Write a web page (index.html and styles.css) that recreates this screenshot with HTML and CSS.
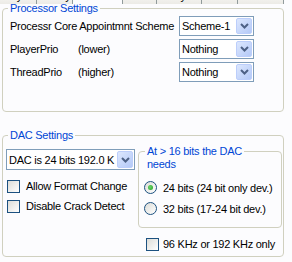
FILE: index.html
```html
<!DOCTYPE html>
<html lang="en">
<head>
    <meta charset="UTF-8">
    <title>Output Settings</title>
    <link rel="stylesheet" href="styles.css">
</head>
<body>
    <div class="tabs">
        <span class="tab">Playlist</span>
        <span class="tab">Library</span>
        <span class="tab tab-active">Output</span>
        <span class="tab">DSP</span>
        <span class="tab">Analysis</span>
        <span class="tab">Info</span>
        <span class="tab">Shortcuts</span>
    </div>

    <div class="page">
        <div class="group proc">
            <div class="group-title">Processor Settings</div>
            <div class="proc-grid">
                <span>Processr Core Appointmnt Scheme</span>
                <div class="combo">
                    <span class="combo-text">Scheme-1</span>
                    <span class="combo-btn"><svg width="9" height="6" viewBox="0 0 9 6"><path d="M1 1l3.5 3.5L8 1" /></svg></span>
                </div>

                <span class="prio"><span class="prio-name">PlayerPrio</span>(lower)</span>
                <div class="combo">
                    <span class="combo-text">Nothing</span>
                    <span class="combo-btn"><svg width="9" height="6" viewBox="0 0 9 6"><path d="M1 1l3.5 3.5L8 1" /></svg></span>
                </div>

                <span class="prio"><span class="prio-name">ThreadPrio</span>(higher)</span>
                <div class="combo">
                    <span class="combo-text">Nothing</span>
                    <span class="combo-btn"><svg width="9" height="6" viewBox="0 0 9 6"><path d="M1 1l3.5 3.5L8 1" /></svg></span>
                </div>
            </div>
        </div>

        <div class="group dac">
            <div class="group-title">DAC Settings</div>
            <div class="dac-grid">
                <div class="dac-left">
                    <div class="combo combo-tall">
                        <span class="combo-text">DAC is 24 bits 192.0 K</span>
                        <span class="combo-btn"><svg width="9" height="6" viewBox="0 0 9 6"><path d="M1 1l3.5 3.5L8 1" /></svg></span>
                    </div>
                    <label class="check first"><span class="box"></span>Allow Format Change</label>
                    <label class="check"><span class="box"></span>Disable Crack Detect</label>
                </div>

                <div class="dac-right">
                    <div class="group inner">
                        <div class="group-title inner-title">At &gt; 16 bits the DAC<br>needs</div>
                        <label class="radio first"><span class="dot dot-on"></span>24 bits (24 bit only dev.)</label>
                        <label class="radio"><span class="dot"></span>32 bits (17-24 bit dev.)</label>
                    </div>
                    <label class="check check-tight"><span class="box"></span>96 KHz or 192 KHz only</label>
                </div>
            </div>
        </div>
    </div>
</body>
</html>
```

FILE: styles.css
```css
body {
    margin: 0;
    width: 292px;
    height: 262px;
    overflow: hidden;
    background: #fcfcfe;
    font-family: 'Liberation Sans', Arial, sans-serif;
    font-size: 11px;
    letter-spacing: -0.25px;
    color: #000;
    white-space: nowrap;
}

.tabs {
    display: flex;
    align-items: flex-end;
    height: 4px;
    overflow: hidden;
}

.tab {
    height: 16px;
    box-sizing: border-box;
    padding-top: 2px;
    line-height: 13px;
    border-right: 1px solid #919b9c;
    background: linear-gradient(#fff, #ecebe6);
    text-align: center;
    overflow: hidden;
}

.tab:nth-child(1) { width: 37px; }
.tab:nth-child(2) { width: 36px; }
.tab:nth-child(3) { width: 50px; }
.tab:nth-child(4) { width: 34px; }
.tab:nth-child(5) { width: 45px; }
.tab:nth-child(6) { width: 36px; }
.tab:nth-child(7) { width: 46px; }

.tab-active {
    background: #fcfcfe;
    color: #fcfcfe;
}

.page {
    height: 258px;
    overflow: hidden;
}

.group {
    border: 1px solid #d0d0bf;
    border-radius: 4px;
}

.group-title {
    width: fit-content;
    margin: -7px 0 0 5px;
    padding: 0 2px;
    line-height: 13px;
    color: #0046d5;
    background: #fcfcfe;
}

.proc {
    margin: 4px 8px 0 2px;
}

.proc-grid {
    display: grid;
    grid-template-columns: 169px 75px;
    row-gap: 3px;
    align-items: center;
    margin: 1px 0 0 7px;
    padding-bottom: 29px;
}

.prio-name {
    display: inline-block;
    width: 68px;
}

.combo {
    display: flex;
    align-items: center;
    height: 20px;
    box-sizing: border-box;
    padding: 1px;
    border: 1px solid #7f9db9;
    background: #fff;
}

.combo-tall {
    height: 21px;
}

.combo-text {
    flex: 1;
    padding-left: 1px;
    overflow: hidden;
}

.combo-btn {
    display: flex;
    align-items: center;
    justify-content: center;
    width: 16px;
    height: 100%;
    box-sizing: border-box;
    border: 1px solid #bccefb;
    border-radius: 2px;
    background: linear-gradient(135deg, #dce7fe, #b4c9f7);
}

.combo-btn path {
    fill: none;
    stroke: #4d6185;
    stroke-width: 2;
}

.dac {
    margin: 23px 8px 0 2px;
}

.dac-grid {
    display: grid;
    grid-template-columns: 129px 1fr;
    column-gap: 3px;
    align-items: start;
    padding: 0 1px 2px 3px;
}

.dac-left {
    margin-top: 7px;
}

.check {
    display: flex;
    align-items: center;
    height: 20px;
}

.check.first {
    margin-top: 6px;
}

.box {
    width: 13px;
    height: 13px;
    box-sizing: border-box;
    margin: 0 6px 0 1px;
    border: 1px solid #1c5180;
    background: linear-gradient(135deg, #dcdcd7, #fff);
}

.dac-right {
    margin-top: 9px;
}

.inner {
    padding-bottom: 8px;
}

.inner-title {
    margin-left: 6px;
}

.radio {
    display: flex;
    align-items: center;
    height: 21px;
    padding-left: 5px;
}

.radio.first {
    margin-top: 6px;
}

.dot {
    display: flex;
    align-items: center;
    justify-content: center;
    width: 13px;
    height: 13px;
    box-sizing: border-box;
    margin-right: 6px;
    border: 1px solid #1c5180;
    border-radius: 50%;
    background: linear-gradient(135deg, #dcdcd7, #fff);
}

.dot-on::after {
    content: '';
    width: 5px;
    height: 5px;
    border-radius: 50%;
    background: radial-gradient(circle at 40% 40%, #6bd46b, #21a121);
}

.check-tight {
    margin-top: 6px;
}

.check-tight .box {
    margin: 0 4px 0 8px;
}
```
